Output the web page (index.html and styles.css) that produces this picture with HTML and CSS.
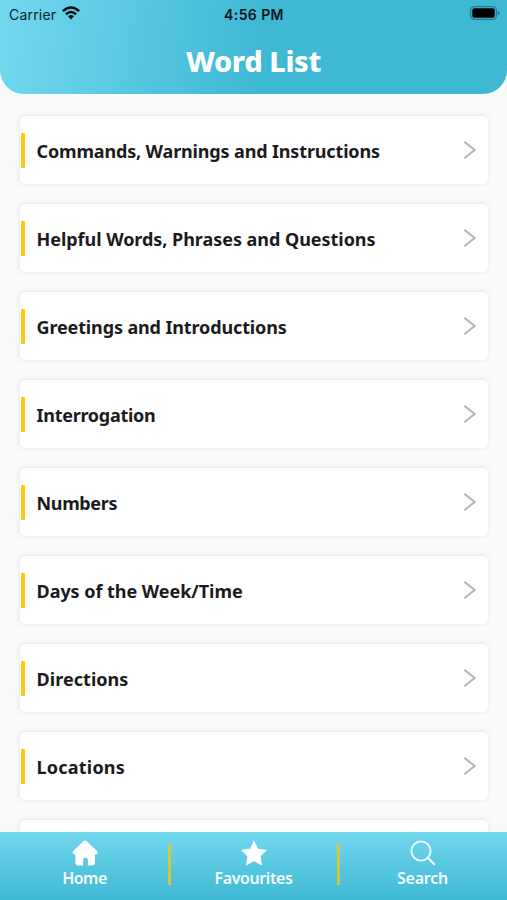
FILE: index.html
```html
<!DOCTYPE html>
<html lang="en">
<head>
<meta charset="utf-8">
<title>Word List</title>
<link rel="stylesheet" href="styles.css">
</head>
<body>
<div class="app">
  <header class="header">
    <div class="status">
      <div class="carrier"><span>Carrier</span>
        <svg class="wifi" width="18" height="14" viewBox="0 0 18 14" fill="none" stroke="#050b0d" stroke-width="2.5"><path d="M.9 5.2Q9-2.2 17.1 5.2M3.9 8.3Q9 3.7 14.1 8.3"/><path d="M6 10.2Q9 7.6 12 10.2L9 13.4Z" fill="#050b0d" stroke="none"/></svg>
      </div>
      <span class="time">4:56 PM</span>
      <svg class="battery" width="30" height="14" viewBox="0 0 30 14"><rect x=".6" y=".6" width="25.8" height="12.8" rx="3.8" fill="none" stroke="#257b8c" stroke-width="1.2"/><rect x="2.3" y="2.3" width="22.4" height="9.4" rx="2" fill="#000"/><path d="M27.6 4.8q2 .4 2 2.2t-2 2.2z" fill="#257b8c"/></svg>
    </div>
    <h1 class="title">Word List</h1>
  </header>
  <main class="list">
    <div class="card"><span class="label commands">Commands, Warnings and Instructions</span><svg class="chevron" viewBox="0 0 12 18"><path d="M1 1.3 10.6 9 1 16.7"/></svg></div>
    <div class="card"><span class="label helpful">Helpful Words, Phrases and Questions</span><svg class="chevron" viewBox="0 0 12 18"><path d="M1 1.3 10.6 9 1 16.7"/></svg></div>
    <div class="card"><span class="label greetings">Greetings and Introductions</span><svg class="chevron" viewBox="0 0 12 18"><path d="M1 1.3 10.6 9 1 16.7"/></svg></div>
    <div class="card"><span class="label interrogation">Interrogation</span><svg class="chevron" viewBox="0 0 12 18"><path d="M1 1.3 10.6 9 1 16.7"/></svg></div>
    <div class="card"><span class="label numbers">Numbers</span><svg class="chevron" viewBox="0 0 12 18"><path d="M1 1.3 10.6 9 1 16.7"/></svg></div>
    <div class="card"><span class="label days">Days of the Week/Time</span><svg class="chevron" viewBox="0 0 12 18"><path d="M1 1.3 10.6 9 1 16.7"/></svg></div>
    <div class="card"><span class="label directions">Directions</span><svg class="chevron" viewBox="0 0 12 18"><path d="M1 1.3 10.6 9 1 16.7"/></svg></div>
    <div class="card"><span class="label locations">Locations</span><svg class="chevron" viewBox="0 0 12 18"><path d="M1 1.3 10.6 9 1 16.7"/></svg></div>
    <div class="card empty"></div>
  </main>
  <nav class="tabs">
    <div class="tab">
      <svg width="26" height="26" viewBox="0 0 26 26" fill="#fff"><path d="M11.4 1.2q1.6-1.3 3.2 0l10 9.4q1.6 1.7.3 3.3-.7.8-2 .7V23q0 2.4-2.4 2.4h-4.600v-5.600q0-2.100-2.400-2.100t-2.400 2.100v5.600H5.800q-2.400 0-2.400-2.400v-8.400q-1.300.1-2-.7-1.300-1.600.3-3.300z"/></svg>
      <span class="tab-label home">Home</span>
    </div>
    <i class="divider"></i>
    <div class="tab">
      <svg width="26" height="26" viewBox="0 0 26 26" fill="#fff" stroke="#fff" stroke-width="1" stroke-linejoin="round"><path d="m13 1.300 3.700 7.900 8.500 1.100-6.200 6 1.500 8.500-7.500-4.100-7.500 4.100L7 16.300l-6.200-6 8.500-1.100z"/></svg>
      <span class="tab-label favourites">Favourites</span>
    </div>
    <i class="divider"></i>
    <div class="tab">
      <svg width="26" height="26" viewBox="0 0 26 26" fill="none" stroke="#e9fbff" stroke-width="1.900"><circle cx="11" cy="11" r="9.600"/><path d="m17.800 17.800 7 7" stroke-width="2.200"/></svg>
      <span class="tab-label search">Search</span>
    </div>
  </nav>
</div>
</body>
</html>
```
FILE: styles.css
```css
* { box-sizing: border-box; }
body { margin: 0; background: #f9fafc; }
.app { width: 507px; height: 900px; display: flex; flex-direction: column; overflow: hidden; font-family: "Noto Sans", sans-serif; }
.header { height: 94px; flex: none; border-radius: 0 0 24px 24px; background: linear-gradient(98deg, #72d8ee 0%, #3fb8d4 52%, #3fb8d4 100%); }
.status { height: 28px; padding: 0 7px 0 9px; display: grid; grid-template-columns: 1fr auto 1fr; align-items: center; font-family: Inter, sans-serif; font-size: 14px; color: #0b2027; }
.carrier { display: flex; align-items: center; gap: 6px; letter-spacing: .2px; }
.wifi { margin-top: -2px; }
.time { font-weight: 600; letter-spacing: .4px; color: #06161b; margin-left: -1px; }
.battery { justify-self: end; margin-top: -2px; }
.title { margin: 12px 0 0; height: 42px; line-height: 42px; text-align: center; font-size: 29px; font-weight: 800; letter-spacing: -.4px; color: #fff; }
.list { flex: 1; min-height: 0; overflow: hidden; padding: 22px 19px 0 20px; display: flex; flex-direction: column; gap: 20px; }
.card { height: 68px; flex: none; display: flex; align-items: center; padding-right: 12px; background: #fff; border-radius: 5px; box-shadow: 0 0 4px rgba(30, 50, 60, .12); }
.card::before { content: ""; width: 4px; height: 35px; margin: 0 12px 0 .5px; border-radius: 1px; background: #fec810; }
.empty::before { display: none; }
.label { flex: 1; padding-top: 1px; white-space: nowrap; font-size: 18px; line-height: 24px; font-weight: 700; color: #1b1b1d; }
.commands { letter-spacing: -.15px; }
.helpful { letter-spacing: -.04px; }
.greetings { letter-spacing: -.13px; }
.interrogation { letter-spacing: -.27px; }
.numbers { letter-spacing: -.35px; }
.days { letter-spacing: -.04px; }
.directions { letter-spacing: .05px; }
.locations { letter-spacing: .22px; }
.chevron { width: 12px; height: 18px; fill: none; stroke: #b4b4b4; stroke-width: 2; stroke-linecap: round; }
.tabs { height: 68px; flex: none; display: flex; background: linear-gradient(#72d8ee, #3fb8d4); }
.tab { flex: 1 1 0; min-width: 0; display: flex; flex-direction: column; align-items: center; padding-top: 8px; }
.tab-label { margin-top: 1px; line-height: 22px; font-size: 16px; font-weight: 600; color: #f2fdff; }
.home { letter-spacing: -.5px; }
.favourites { letter-spacing: -.4px; }
.search { letter-spacing: -.2px; }
.divider { width: 3px; height: 41px; margin: 12px -1.5px 0; background: #d3c83c; }
```
